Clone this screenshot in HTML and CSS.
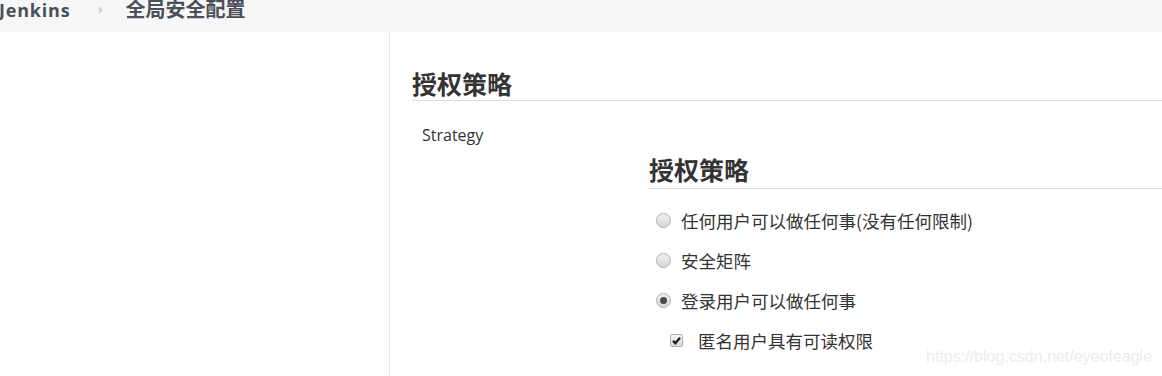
FILE: index.html
```html
<!DOCTYPE html>
<html lang="zh-CN">
<head>
<meta charset="utf-8">
<title>全局安全配置</title>
<link rel="stylesheet" href="styles.css">
</head>
<body>
<header class="breadcrumb-bar">
  <ul class="breadcrumbs">
    <li class="crumb crumb-root">Jenkins</li>
    <li class="crumb-sep"></li>
    <li class="crumb crumb-page">全局安全配置</li>
  </ul>
</header>
<div class="page">
  <aside class="side-panel"></aside>
  <main class="main-panel">
    <h2 class="section-title">授权策略</h2>
    <div class="setting-row">
      <div class="setting-name">Strategy</div>
    </div>
    <div class="nested">
      <h2 class="section-title nested-title">授权策略</h2>
      <ul class="options">
        <li class="option"><span class="radio"></span><span class="option-label">任何用户可以做任何事(没有任何限制)</span></li>
        <li class="option"><span class="radio"></span><span class="option-label">安全矩阵</span></li>
        <li class="option"><span class="radio checked"></span><span class="option-label">登录用户可以做任何事</span></li>
        <li class="option sub-option"><span class="checkbox"><svg viewBox="0 0 13 13" width="13" height="13"><path d="M3 6.8 L5.4 9.2 L10 3.8" fill="none" stroke="#222" stroke-width="2.4"/></svg></span><span class="option-label">匿名用户具有可读权限</span></li>
      </ul>
    </div>
    <div class="watermark">https://blog.csdn.net/eyeofeagle</div>
  </main>
</div>
</body>
</html>
```

FILE: styles.css
```css
html, body {
  margin: 0;
  padding: 0;
  background: #ffffff;
  height: 100%;
  overflow: hidden;
}
body {
  font-family: "Open Sans", "Noto Sans CJK SC", sans-serif;
  color: #333333;
}
.breadcrumb-bar {
  height: 32px;
  background: #f7f7f7;
  overflow: hidden;
}
.breadcrumbs {
  list-style: none;
  margin: 0;
  padding: 0;
  display: flex;
  align-items: center;
  height: 20px;
}
.crumb {
  font-weight: 700;
  color: #4b5059;
  line-height: 20px;
}
.crumb-root {
  font-family: "Open Sans", sans-serif;
  font-size: 18px;
  letter-spacing: 0.8px;
  margin-left: -1px;
}
.crumb-sep {
  width: 0;
  height: 0;
  border-top: 4px solid transparent;
  border-bottom: 4px solid transparent;
  border-left: 4px solid #cfcfcf;
  margin-left: 29px;
  margin-right: 22px;
  margin-top: -1px;
}
.crumb-page {
  font-family: "Noto Sans CJK SC", sans-serif;
  font-size: 20px;
  margin-top: -2px;
}
.page {
  display: flex;
  height: calc(100% - 32px);
}
.side-panel {
  width: 389px;
  border-right: 1px solid #e9e9e9;
  flex: none;
}
.main-panel {
  flex: 1;
  position: relative;
  padding-top: 34px;
  padding-left: 22px;
}
.section-title {
  font-family: "Noto Sans CJK SC", sans-serif;
  font-size: 25px;
  font-weight: 700;
  line-height: 34px;
  color: #333333;
  margin: 0;
  border-bottom: 1px solid #dddddd;
}
.nested-title {
  line-height: 38px;
}
.setting-row {
  padding-left: 10px;
  padding-top: 23px;
}
.setting-name {
  font-family: "Open Sans", sans-serif;
  font-size: 16px;
  line-height: 22px;
  color: #333333;
}
.nested {
  margin-left: 237px;
  margin-top: 4px;
}
.options {
  list-style: none;
  margin: 0;
  padding: 18px 0 0 7px;
}
.option {
  display: flex;
  align-items: center;
  height: 26px;
  margin-bottom: 14px;
}
.sub-option {
  padding-left: 14px;
  margin-top: 2px;
}
.option-label {
  font-family: "Noto Sans CJK SC", sans-serif;
  font-size: 17.5px;
  color: #333333;
  margin-left: 10px;
}
.sub-option .option-label {
  margin-left: 15px;
}
.radio {
  width: 13px;
  height: 13px;
  border-radius: 50%;
  border: 1px solid #b0b0b0;
  background: linear-gradient(#f2f2f2, #d6d6d6);
  flex: none;
  display: flex;
  align-items: center;
  justify-content: center;
}
.radio.checked::after {
  content: "";
  width: 7px;
  height: 7px;
  border-radius: 50%;
  background: #4a4a4a;
}
.checkbox {
  width: 13px;
  height: 13px;
  border: 1px solid #b0b0b0;
  border-radius: 2px;
  background: linear-gradient(#f4f4f4, #d9d9d9);
  box-sizing: border-box;
  flex: none;
  display: flex;
}
.checkbox svg {
  margin: -1px;
}
.watermark {
  position: absolute;
  right: 10px;
  bottom: 10px;
  font-family: "Liberation Sans", Arial, sans-serif;
  font-size: 16px;
  color: #ececec;
}
```
